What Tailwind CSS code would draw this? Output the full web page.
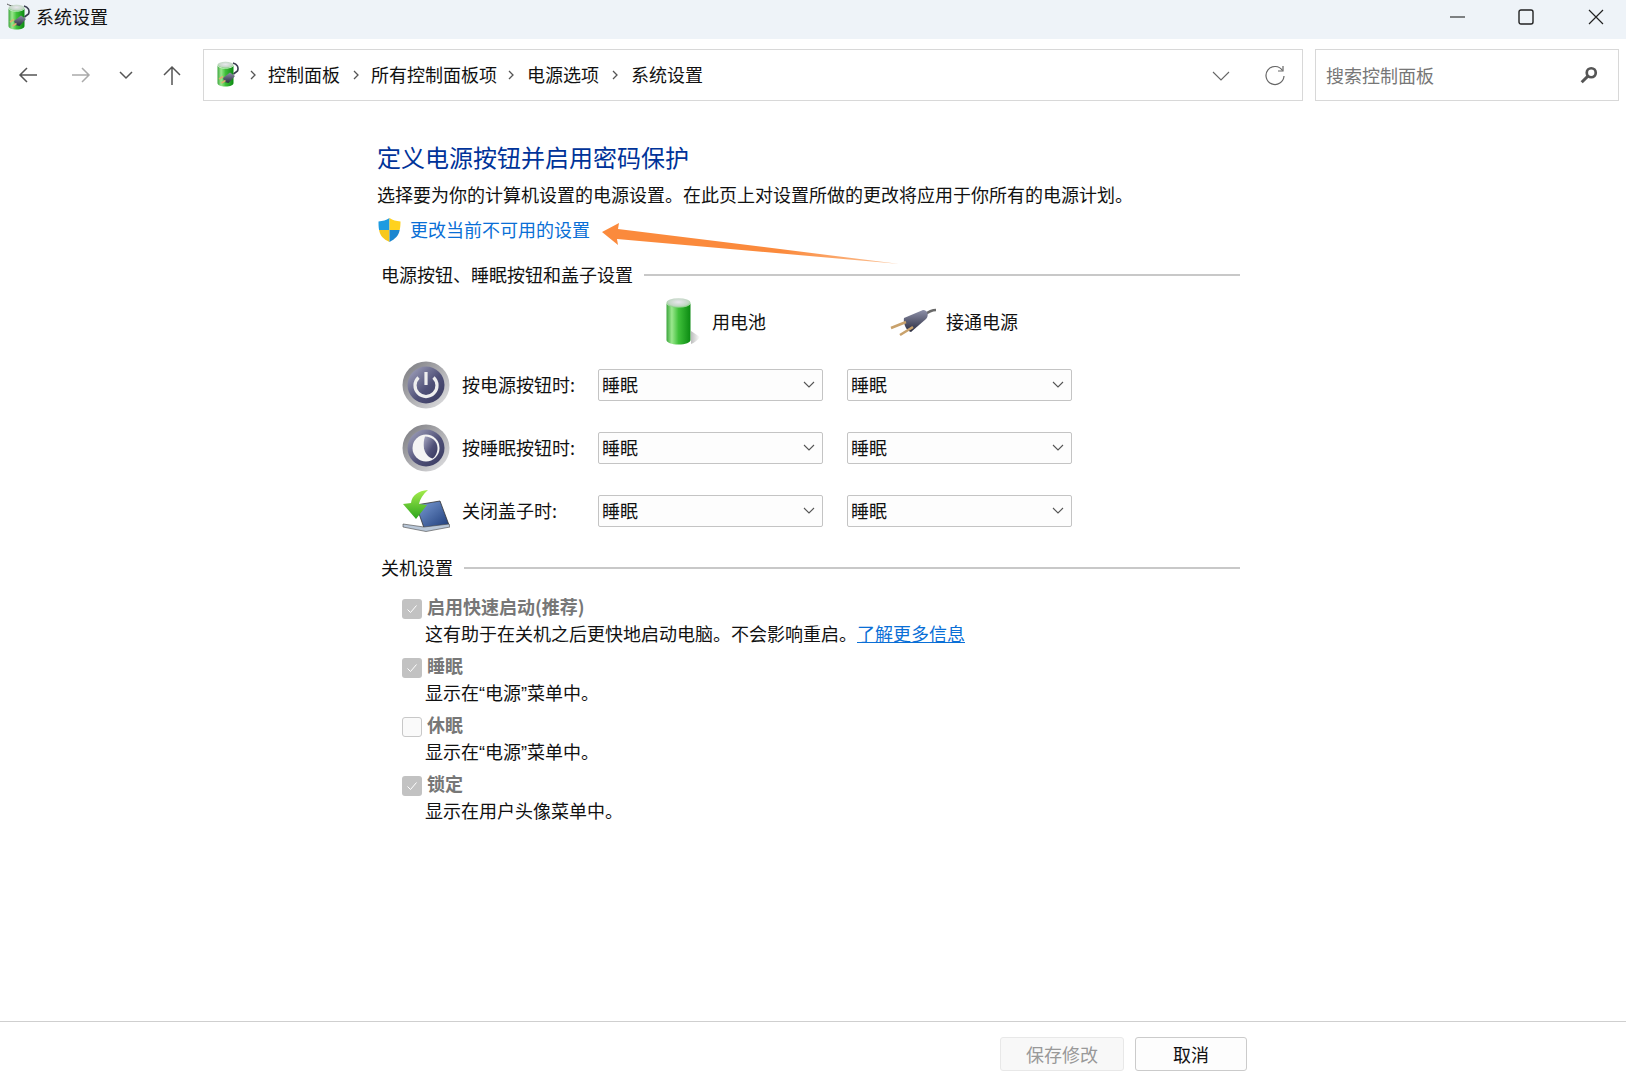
<!DOCTYPE html>
<html lang="zh-CN">
<head>
<meta charset="utf-8">
<script src="https://cdn.jsdelivr.net/npm/@tailwindcss/browser@4"></script>
<title>系统设置</title>
</head>
<body class="bg-white">
<svg class="absolute w-0 h-0" aria-hidden="true">
  <defs>
    <linearGradient id="g-batt" x1="0" x2="1" y1="0" y2="0"><stop offset="0" stop-color="#3ca63c"/><stop offset=".22" stop-color="#9be88e"/><stop offset=".5" stop-color="#3fc03a"/><stop offset="1" stop-color="#0b8a12"/></linearGradient>
    <radialGradient id="g-cap" cx=".5" cy=".4" r=".6"><stop offset="0" stop-color="#e9e7ee"/><stop offset=".7" stop-color="#c2d6c4"/><stop offset="1" stop-color="#7ccf78"/></radialGradient>
    <linearGradient id="g-shadow" x1="0" x2="1" y1="0" y2="0"><stop offset="0" stop-color="#bdbdbd"/><stop offset="1" stop-color="#ffffff"/></linearGradient>
    <linearGradient id="g-ring" x1="0" x2="1" y1="0" y2="1"><stop offset="0" stop-color="#77777c"/><stop offset="1" stop-color="#e4e4e6"/></linearGradient>
    <linearGradient id="g-face" x1="0" x2="1" y1="0" y2="1"><stop offset="0" stop-color="#a8a9c2"/><stop offset=".55" stop-color="#505178"/><stop offset="1" stop-color="#37385e"/></linearGradient>
    <linearGradient id="g-plug" x1="0" x2="0" y1="0" y2="1"><stop offset="0" stop-color="#8d90a8"/><stop offset="1" stop-color="#2b2d40"/></linearGradient>
    <linearGradient id="g-arrow" x1="0" x2="1" y1="0" y2="0"><stop offset="0" stop-color="#fb8a3c"/><stop offset=".6" stop-color="#fb8a3c"/><stop offset="1" stop-color="#fbc49a"/></linearGradient>
    <linearGradient id="g-green" x1="0" x2="0" y1="0" y2="1"><stop offset="0" stop-color="#a5ec4c"/><stop offset="1" stop-color="#2ca51d"/></linearGradient>
    <linearGradient id="g-screen" x1="0" x2="1" y1="0" y2="1"><stop offset="0" stop-color="#7ea0d8"/><stop offset="1" stop-color="#1c3a78"/></linearGradient>
  </defs>
</svg>

<div class="relative flex flex-col h-[1083px] w-[1626px] overflow-hidden font-['Noto_Sans_CJK_SC','Liberation_Sans',sans-serif] text-[18px] text-[#111]">

  <!-- title bar -->
  <header class="flex items-center h-[39px] pb-[6px] bg-[#eef3f8] shrink-0">
    <svg class="ml-[5px] w-[25px] h-[27px]" viewBox="0 0 25 27">
      <path d="M2 1c2 1 4 2 6 2" stroke="#555" fill="none"/>
      <path d="M3.500 5v18c0 2 3 3.500 8 3.500s8-1.500 8-3.500V5c0 2-3 3.500-8 3.500S3.500 7 3.500 5z" fill="url(#g-batt)"/>
      <ellipse cx="11.500" cy="5" rx="8" ry="3.200" fill="url(#g-cap)"/>
      <path d="M19 3c4 1 6 4 4.500 8l-4 3" stroke="#3a3c50" stroke-width="1.600" fill="none"/>
      <path d="M9 18l7-5.500 5 3.500-6.500 7-4-1z" fill="url(#g-plug)"/>
      <path d="M5 19l4-2.500M7.500 23l4-2.500" stroke="#d9b070" stroke-width="1.500"/>
    </svg>
    <span class="ml-[6px]">系统设置</span>
    <div class="ml-auto flex items-center h-full">
      <svg class="w-[16px] h-[16px] mr-[52px]" viewBox="0 0 16 16"><path d="M0 8h15" stroke="#222" stroke-width="1.100"/></svg>
      <svg class="w-[16px] h-[16px] mr-[54px]" viewBox="0 0 16 16"><rect x="1" y="1" width="14" height="14" rx="2" fill="none" stroke="#222" stroke-width="1.400"/></svg>
      <svg class="w-[16px] h-[16px] mr-[22px]" viewBox="0 0 16 16"><path d="M1 1l14 14M15 1L1 15" stroke="#222" stroke-width="1.200"/></svg>
    </div>
  </header>

  <!-- navigation bar -->
  <nav class="flex items-start pt-[10px] h-[70px] shrink-0">
    <div class="flex items-center h-[52px] w-[203px] shrink-0">
      <svg class="ml-[18px] w-[20px] h-[20px]" viewBox="0 0 20 20"><path d="M19 10H2M9 3l-7 7 7 7" fill="none" stroke="#555" stroke-width="1.500"/></svg>
      <svg class="ml-[33px] w-[20px] h-[20px]" viewBox="0 0 20 20"><path d="M1 10h17M11 3l7 7-7 7" fill="none" stroke="#aaa" stroke-width="1.500"/></svg>
      <svg class="ml-[28px] w-[14px] h-[14px]" viewBox="0 0 14 14"><path d="M1 4l6 6 6-6" fill="none" stroke="#555" stroke-width="1.500"/></svg>
      <svg class="ml-[29px] w-[20px] h-[22px]" viewBox="0 0 20 22"><path d="M10 21V3M2 11l8-8 8 8" fill="none" stroke="#555" stroke-width="1.500"/></svg>
    </div>
    <div class="flex items-center w-[1100px] h-[52px] border border-[#d8d8d8] shrink-0">
      <svg class="ml-[10px] -mt-[3px] w-[25px] h-[27px]" viewBox="0 0 25 27">
        <path d="M3.500 5v18c0 2 3 3.500 8 3.500s8-1.500 8-3.500V5c0 2-3 3.500-8 3.500S3.500 7 3.500 5z" fill="url(#g-batt)"/>
        <ellipse cx="11.500" cy="5" rx="8" ry="3.200" fill="url(#g-cap)"/>
        <path d="M19 3c4 1 6 4 4.500 8l-4 3" stroke="#3a3c50" stroke-width="1.600" fill="none"/>
        <path d="M9 18l7-5.500 5 3.500-6.500 7-4-1z" fill="url(#g-plug)"/>
        <path d="M5 19l4-2.500M7.500 23l4-2.500" stroke="#d9b070" stroke-width="1.500"/>
      </svg>
      <svg class="ml-[10px] w-[8px] h-[12px]" viewBox="0 0 8 12"><path d="M2 2l4 4-4 4" fill="none" stroke="#555" stroke-width="1.300"/></svg>
      <span class="ml-[11px] pb-[2px]">控制面板</span>
      <svg class="ml-[12px] w-[8px] h-[12px]" viewBox="0 0 8 12"><path d="M2 2l4 4-4 4" fill="none" stroke="#555" stroke-width="1.300"/></svg>
      <span class="ml-[11px] pb-[2px]">所有控制面板项</span>
      <svg class="ml-[10px] w-[8px] h-[12px]" viewBox="0 0 8 12"><path d="M2 2l4 4-4 4" fill="none" stroke="#555" stroke-width="1.300"/></svg>
      <span class="ml-[12px] pb-[2px]">电源选项</span>
      <svg class="ml-[12px] w-[8px] h-[12px]" viewBox="0 0 8 12"><path d="M2 2l4 4-4 4" fill="none" stroke="#555" stroke-width="1.300"/></svg>
      <span class="ml-[12px] pb-[2px]">系统设置</span>
      <svg class="ml-auto mt-[2px] w-[18px] h-[10px]" viewBox="0 0 18 10"><path d="M1 1l8 8 8-8" fill="none" stroke="#666" stroke-width="1.100"/></svg>
      <svg class="ml-[34px] mt-[1px] mr-[16px] w-[22px] h-[22px]" viewBox="0 0 22 22"><path d="M18.500 5.500A9 9 0 1 0 20 11" fill="none" stroke="#666" stroke-width="1.200"/><path d="M19 1v5h-5" fill="none" stroke="#666" stroke-width="1.200"/></svg>
    </div>
    <div class="ml-[12px] flex items-center w-[304px] h-[52px] border border-[#d8d8d8] shrink-0">
      <span class="ml-[10px] text-[#777]">搜索控制面板</span>
      <svg class="ml-auto mr-[20px] w-[18px] h-[18px]" viewBox="0 0 16 16"><circle cx="10" cy="6" r="4" fill="none" stroke="#555" stroke-width="2.400"/><path d="M7 9l-5.500 5.500" stroke="#555" stroke-width="2.600"/></svg>
    </div>
  </nav>

  <!-- body -->
  <main class="flex-1 pl-[377px] pt-[32px]">
    <h1 class="flex items-center h-[34px] pb-[2px] text-[24px] font-normal text-[#003399]">定义电源按钮并启用密码保护</h1>
    <p class="flex items-center h-[36px] mt-[2px] pb-[2px]">选择要为你的计算机设置的电源设置。在此页上对设置所做的更改将应用于你所有的电源计划。</p>
    <div class="flex items-center h-[34px]">
      <svg class="ml-[1px] w-[23px] h-[24px]" viewBox="0 0 23 24">
        <path d="M11.500 0C8 2.500 5 3 .5 3.500c0 3 .1 6 .6 8.500H11.500z" fill="#1e9be0"/>
        <path d="M11.500 0c3.500 2.500 6.500 3 11 3.500 0 3-.2 6-.8 8.500H11.500z" fill="#ffd21e"/>
        <path d="M1.100 12h10.400v12C5 21 2 17.500 1.100 12z" fill="#f7c81c"/>
        <path d="M11.500 12h10.200c-1 5.500-4.500 9-10.200 12z" fill="#1a86d0"/>
      </svg>
      <a class="ml-[9px] pb-[2px] text-[#0a6fd6]">更改当前不可用的设置</a>
    </div>

    <div class="flex items-center w-[863px] h-[34px] mt-[11px] pl-[4px]">
      <span class="pb-[2px]">电源按钮、睡眠按钮和盖子设置</span>
      <div class="ml-[11px] flex-1 h-[2px] bg-[#c8c8c8]"></div>
    </div>

    <div class="flex items-center h-[46px] mt-[7px]">
      <div class="flex items-center w-[513px] pl-[288px]">
        <svg class="w-[36px] h-[47px] -mt-[1px]" viewBox="0 0 36 47">
          <path d="M26 33l9 6c-2 3-6 6-9 7z" fill="url(#g-shadow)"/>
          <path d="M1.500 5v37c0 2.500 5 4.500 12 4.500s12-2 12-4.500V5c0 2.500-5 4-12 4s-12-1.500-12-4z" fill="url(#g-batt)"/>
          <ellipse cx="13.500" cy="5" rx="12" ry="4.800" fill="url(#g-cap)"/>
        </svg>
        <span class="ml-[11px] pb-[2px]">用电池</span>
      </div>
      <svg class="w-[46px] h-[30px]" viewBox="0 0 46 30">
        <path d="M34 8c4-3 8-5 12-5" stroke="#6a6a6a" stroke-width="2.600" fill="none"/>
        <path d="M14 11l19-8c5 0 6 6 3 9L21 25c-5-1-8-9-7-14z" fill="url(#g-plug)"/>
        <path d="M1 21l15-6M10 28l13-8" stroke="#c9a26c" stroke-width="2.600"/>
      </svg>
      <span class="ml-[10px] pb-[2px]">接通电源</span>
    </div>

    <div class="flex flex-col gap-[31px] mt-[24px]">
      <div class="flex items-center h-[32px]">
        <svg class="ml-[25px] w-[48px] h-[48px] shrink-0" viewBox="0 0 48 48">
          <circle cx="24" cy="24" r="23.500" fill="url(#g-ring)"/><circle cx="24" cy="24" r="18.500" fill="url(#g-face)"/>
          <path d="M16.500 16.500a11 11 0 1 0 15 0" fill="none" stroke="#eee" stroke-width="3.200"/><path d="M24 11v13" stroke="#eee" stroke-width="3.200"/>
        </svg>
        <span class="ml-[12px] w-[136px] pb-[2px]">按电源按钮时:</span>
        <div class="flex items-center justify-between w-[225px] h-[32px] px-[3px] border border-[#c4c4c4] rounded-[2px] bg-[#fdfdfd]"><span class="pb-[2px]">睡眠</span><svg class="mr-[4px] w-[12px] h-[8px]" viewBox="0 0 12 8"><path d="M1 1l5 5 5-5" fill="none" stroke="#555" stroke-width="1.100"/></svg></div>
        <div class="ml-[24px] flex items-center justify-between w-[225px] h-[32px] px-[3px] border border-[#c4c4c4] rounded-[2px] bg-[#fdfdfd]"><span class="pb-[2px]">睡眠</span><svg class="mr-[4px] w-[12px] h-[8px]" viewBox="0 0 12 8"><path d="M1 1l5 5 5-5" fill="none" stroke="#555" stroke-width="1.100"/></svg></div>
      </div>
      <div class="flex items-center h-[32px]">
        <svg class="ml-[25px] w-[48px] h-[48px] shrink-0" viewBox="0 0 48 48">
          <circle cx="24" cy="24" r="23.500" fill="url(#g-ring)"/><circle cx="24" cy="24" r="18.500" fill="url(#g-face)"/>
          <circle cx="24" cy="24" r="13.500" fill="#f4f4f4"/>
          <path d="M23 12.500c7 0 12.500 5 12.500 11.500 0 4.500-2 8.500-5 10.500-4 -1-7.500-5-8.500-10-.6-4.500-.3-8.500 1-12z" fill="url(#g-face)"/>
        </svg>
        <span class="ml-[12px] w-[136px] pb-[2px]">按睡眠按钮时:</span>
        <div class="flex items-center justify-between w-[225px] h-[32px] px-[3px] border border-[#c4c4c4] rounded-[2px] bg-[#fdfdfd]"><span class="pb-[2px]">睡眠</span><svg class="mr-[4px] w-[12px] h-[8px]" viewBox="0 0 12 8"><path d="M1 1l5 5 5-5" fill="none" stroke="#555" stroke-width="1.100"/></svg></div>
        <div class="ml-[24px] flex items-center justify-between w-[225px] h-[32px] px-[3px] border border-[#c4c4c4] rounded-[2px] bg-[#fdfdfd]"><span class="pb-[2px]">睡眠</span><svg class="mr-[4px] w-[12px] h-[8px]" viewBox="0 0 12 8"><path d="M1 1l5 5 5-5" fill="none" stroke="#555" stroke-width="1.100"/></svg></div>
      </div>
      <div class="flex items-center h-[32px]">
        <svg class="ml-[25px] w-[48px] h-[42px] shrink-0" viewBox="0 0 48 42">
          <path d="M14 15l24-4 9 24-25 3z" fill="url(#g-screen)" stroke="#333" stroke-width=".8"/>
          <path d="M1 34l21 3 25-3 1 3-24 4.500L1 37z" fill="#b9c7d8" stroke="#444" stroke-width=".6"/>
          <path d="M26 0C16 1 10 5 9 13l-8 1 13 15 11-14-8-1c1-5 4-10 9-14z" fill="url(#g-green)"/>
        </svg>
        <span class="ml-[12px] w-[136px] pb-[2px]">关闭盖子时:</span>
        <div class="flex items-center justify-between w-[225px] h-[32px] px-[3px] border border-[#c4c4c4] rounded-[2px] bg-[#fdfdfd]"><span class="pb-[2px]">睡眠</span><svg class="mr-[4px] w-[12px] h-[8px]" viewBox="0 0 12 8"><path d="M1 1l5 5 5-5" fill="none" stroke="#555" stroke-width="1.100"/></svg></div>
        <div class="ml-[24px] flex items-center justify-between w-[225px] h-[32px] px-[3px] border border-[#c4c4c4] rounded-[2px] bg-[#fdfdfd]"><span class="pb-[2px]">睡眠</span><svg class="mr-[4px] w-[12px] h-[8px]" viewBox="0 0 12 8"><path d="M1 1l5 5 5-5" fill="none" stroke="#555" stroke-width="1.100"/></svg></div>
      </div>
    </div>

    <div class="flex items-center w-[863px] h-[34px] mt-[24px] pl-[4px]">
      <span class="pb-[2px]">关机设置</span>
      <div class="ml-[11px] flex-1 h-[2px] bg-[#c8c8c8]"></div>
    </div>

    <div class="flex flex-col gap-[6px] mt-[8px] pl-[25px]">
      <div>
        <div class="flex items-center h-[26px]">
          <span class="flex items-center justify-center mt-[6px] w-[20px] h-[20px] rounded-[3px] bg-[#c2c2c2]"><svg class="w-[12px] h-[12px]" viewBox="0 0 12 12"><path d="M1.500 6.500l3 3 6-7" fill="none" stroke="#fff" stroke-width="1"/></svg></span>
          <span class="ml-[5px] font-bold text-[#777]">启用快速启动(推荐)</span>
        </div>
        <p class="flex items-center h-[26px] mt-[1px] pl-[23px]">这有助于在关机之后更快地启动电脑。不会影响重启。<a class="text-[#0a6fd6] underline">了解更多信息</a></p>
      </div>
      <div>
        <div class="flex items-center h-[26px]">
          <span class="flex items-center justify-center mt-[6px] w-[20px] h-[20px] rounded-[3px] bg-[#c2c2c2]"><svg class="w-[12px] h-[12px]" viewBox="0 0 12 12"><path d="M1.500 6.500l3 3 6-7" fill="none" stroke="#fff" stroke-width="1"/></svg></span>
          <span class="ml-[5px] font-bold text-[#777]">睡眠</span>
        </div>
        <p class="h-[26px] leading-[26px] mt-[1px] pl-[23px]">显示在<span class="font-['Liberation_Sans']">“</span>电源<span class="font-['Liberation_Sans']">”</span>菜单中。</p>
      </div>
      <div>
        <div class="flex items-center h-[26px]">
          <span class="mt-[6px] w-[20px] h-[20px] rounded-[3px] border border-[#c8c8c8] bg-[#fafafa]"></span>
          <span class="ml-[5px] font-bold text-[#777]">休眠</span>
        </div>
        <p class="h-[26px] leading-[26px] mt-[1px] pl-[23px]">显示在<span class="font-['Liberation_Sans']">“</span>电源<span class="font-['Liberation_Sans']">”</span>菜单中。</p>
      </div>
      <div>
        <div class="flex items-center h-[26px]">
          <span class="flex items-center justify-center mt-[6px] w-[20px] h-[20px] rounded-[3px] bg-[#c2c2c2]"><svg class="w-[12px] h-[12px]" viewBox="0 0 12 12"><path d="M1.500 6.500l3 3 6-7" fill="none" stroke="#fff" stroke-width="1"/></svg></span>
          <span class="ml-[5px] font-bold text-[#777]">锁定</span>
        </div>
        <p class="flex items-center h-[26px] mt-[1px] pl-[23px]">显示在用户头像菜单中。</p>
      </div>
    </div>
  </main>

  <!-- footer -->
  <footer class="flex items-start justify-end h-[62px] pt-[15px] pr-[379px] border-t border-[#cfcfcf] shrink-0">
    <button class="w-[124px] h-[34px] rounded-[3px] border border-[#e8e8e8] bg-[#f8f8f8] text-[#999]">保存修改</button>
    <button class="ml-[11px] w-[112px] h-[34px] rounded-[3px] border border-[#cbcbcb] bg-[#fdfdfd] text-[#111]">取消</button>
  </footer>

  <!-- annotation arrow -->
  <svg class="absolute left-[600px] top-[221px] w-[300px] h-[44px]" viewBox="0 0 300 44">
    <path d="M2 11L19 2l-1 6 282 35L17 18l1 6z" fill="url(#g-arrow)"/>
  </svg>
</div>
</body>
</html>
